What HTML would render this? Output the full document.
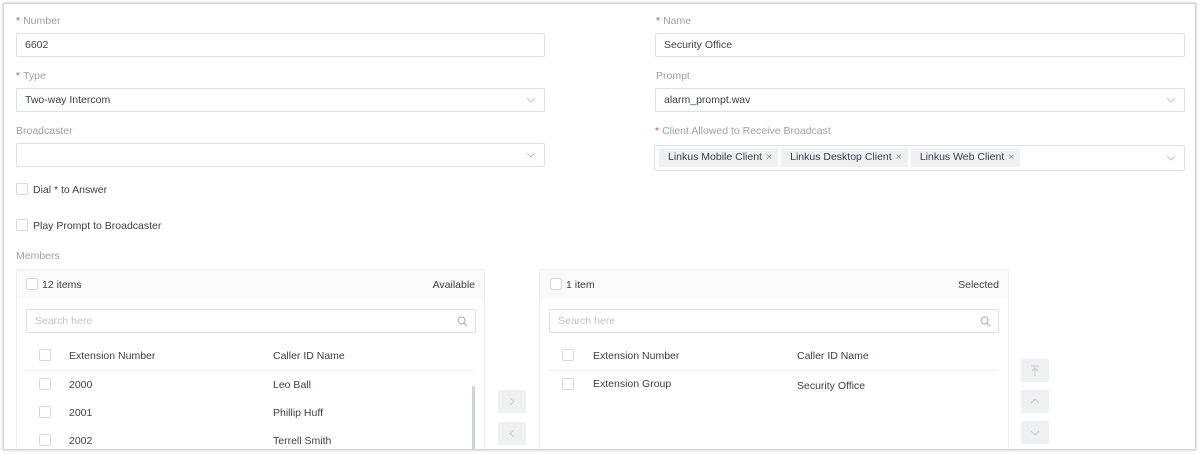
<!DOCTYPE html><html><head><style>
*{box-sizing:border-box;margin:0;padding:0}
body{width:1200px;height:454px;background:#fff;font-family:"Liberation Sans",sans-serif;font-size:10.5px;color:#3a3f48;position:relative;overflow:hidden}
.frame{position:absolute;left:3px;top:3px;width:1193px;height:447px;border:1px solid #d4d4d4;box-shadow:0 0 3px #bbb;overflow:hidden}
.clip{position:absolute;left:0;top:0;width:1193px;height:446px;overflow:hidden}
.a{position:absolute;white-space:nowrap}
.lbl{color:#9aa1ab}
.st{color:#e74c3c;margin-right:3px}
.in{position:absolute;border:1px solid #dcdfe6;border-radius:2px;background:#fff;padding-left:8px;line-height:22px;color:#3a3f48;white-space:nowrap}
.chev{position:absolute;right:8px;top:7px}
.cb{position:absolute;width:12px;height:12px;border:1px solid #d5d8de;border-radius:2px;background:#fff}
.tags{position:absolute;left:4px;top:2px;display:flex;gap:3px}
.tag{height:19px;background:#eef0f3;line-height:19px;padding:0 6px 0 9px;color:#3a3f48;white-space:nowrap}
.tag i{font-style:normal;color:#888;margin-left:4px}
.panel{position:absolute;border:1px solid #ebedf0;height:200px}
.ph{height:29px;background:#fafafa;position:relative}
.btn{position:absolute;width:28px;height:23px;background:#eef0f2;border-radius:2px}
.btn svg{position:absolute;left:9px;top:6px}
.srch{position:absolute;right:7px;top:6px}
</style></head><body>
<div class="frame"><div class="clip">
<!-- offset coordinates by -4 (frame left/top incl. border) -->
<div class="a lbl" style="left:12px;top:11px"><span class="st">*</span>Number</div>
<div class="in" style="left:12px;top:29px;width:529px;height:24px">6602</div>
<div class="a lbl" style="left:12px;top:66px"><span class="st">*</span>Type</div>
<div class="in" style="left:12px;top:84px;width:529px;height:24px">Two-way Intercom<svg class="chev" width="10" height="8"><path d="M1 2l4 4 4-4" fill="none" stroke="#bfc3ca"/></svg></div>
<div class="a lbl" style="left:12px;top:121px">Broadcaster</div>
<div class="in" style="left:12px;top:139px;width:529px;height:24px"><svg class="chev" width="10" height="8"><path d="M1 2l4 4 4-4" fill="none" stroke="#bfc3ca"/></svg></div>
<div class="cb" style="left:12px;top:179px"></div><div class="a" style="left:29px;top:180px">Dial * to Answer</div>
<div class="cb" style="left:12px;top:215px"></div><div class="a" style="left:29px;top:216px">Play Prompt to Broadcaster</div>
<div class="a lbl" style="left:12px;top:246px">Members</div>

<div class="a lbl" style="left:652px;top:11px"><span class="st">*</span>Name</div>
<div class="in" style="left:651px;top:29px;width:530px;height:24px">Security Office</div>
<div class="a lbl" style="left:652px;top:66px">Prompt</div>
<div class="in" style="left:651px;top:84px;width:530px;height:24px">alarm_prompt.wav<svg class="chev" width="10" height="8"><path d="M1 2l4 4 4-4" fill="none" stroke="#bfc3ca"/></svg></div>
<div class="a lbl" style="left:651px;top:121px"><span class="st">*</span>Client Allowed to Receive Broadcast</div>
<div class="in" style="left:650px;top:141px;width:531px;height:26px;padding:0">
<div class="tags"><div class="tag">Linkus Mobile Client<i>×</i></div><div class="tag">Linkus Desktop Client<i>×</i></div><div class="tag">Linkus Web Client<i>×</i></div></div>
<svg class="chev" style="top:8px" width="10" height="8"><path d="M1 2l4 4 4-4" fill="none" stroke="#bfc3ca"/></svg></div>

<div class="panel" style="left:12px;top:265px;width:469px">
<div class="ph"><div class="cb" style="left:9px;top:8px"></div><div class="a" style="left:25px;top:9px">12 items</div><div class="a" style="right:9px;top:9px">Available</div></div>
<div class="in" style="left:9px;top:39px;width:450px;height:24px;color:#c0c4cc">Search here<svg class="srch" width="11" height="11"><circle cx="4.5" cy="4.5" r="3.5" fill="none" stroke="#aaa"/><path d="M7 7l3 3" stroke="#aaa"/></svg></div>
<div class="cb" style="left:22px;top:79px"></div><div class="a" style="left:52px;top:80px">Extension Number</div><div class="a" style="left:256px;top:80px">Caller ID Name</div>
<div class="a" style="left:9px;top:100px;width:447px;height:1px;background:#ebedf0"></div>
<div class="cb" style="left:22px;top:108px"></div><div class="a" style="left:52px;top:109px">2000</div><div class="a" style="left:256px;top:109px">Leo Ball</div>
<div class="cb" style="left:22px;top:136px"></div><div class="a" style="left:52px;top:137px">2001</div><div class="a" style="left:256px;top:137px">Phillip Huff</div>
<div class="cb" style="left:22px;top:164px"></div><div class="a" style="left:52px;top:165px">2002</div><div class="a" style="left:256px;top:165px">Terrell Smith</div>
<div class="a" style="left:455px;top:116px;width:3px;height:80px;background:#d0d3d8;border-radius:2px"></div>
</div>
<div class="btn" style="left:494px;top:386px"><svg width="10" height="11"><path d="M3 2l4 3.5-4 3.5" fill="none" stroke="#c6cad0"/></svg></div>
<div class="btn" style="left:494px;top:418px"><svg width="10" height="11"><path d="M7 2l-4 3.5 4 3.5" fill="none" stroke="#c6cad0"/></svg></div>

<div class="panel" style="left:535px;top:265px;width:470px">
<div class="ph"><div class="cb" style="left:10px;top:8px"></div><div class="a" style="left:26px;top:9px">1 item</div><div class="a" style="right:9px;top:9px">Selected</div></div>
<div class="in" style="left:9px;top:39px;width:450px;height:24px;color:#c0c4cc">Search here<svg class="srch" width="11" height="11"><circle cx="4.5" cy="4.5" r="3.5" fill="none" stroke="#aaa"/><path d="M7 7l3 3" stroke="#aaa"/></svg></div>
<div class="cb" style="left:22px;top:79px"></div><div class="a" style="left:53px;top:80px">Extension Number</div><div class="a" style="left:257px;top:80px">Caller ID Name</div>
<div class="a" style="left:9px;top:100px;width:448px;height:1px;background:#ebedf0"></div>
<div class="cb" style="left:22px;top:108px"></div><div class="a" style="left:53px;top:108px">Extension Group</div><div class="a" style="left:257px;top:110px">Security Office</div>
</div>
<div class="btn" style="left:1017px;top:355px"><svg width="10" height="11"><path d="M1 1h8M5 3v8M2 6l3-3 3 3" fill="none" stroke="#c6cad0"/></svg></div>
<div class="btn" style="left:1017px;top:386px"><svg width="10" height="11"><path d="M1 7l4-4 4 4" fill="none" stroke="#c6cad0"/></svg></div>
<div class="btn" style="left:1017px;top:417px"><svg width="10" height="11"><path d="M1 4l4 4 4-4" fill="none" stroke="#c6cad0"/></svg></div>
</div></div>
</body></html>
